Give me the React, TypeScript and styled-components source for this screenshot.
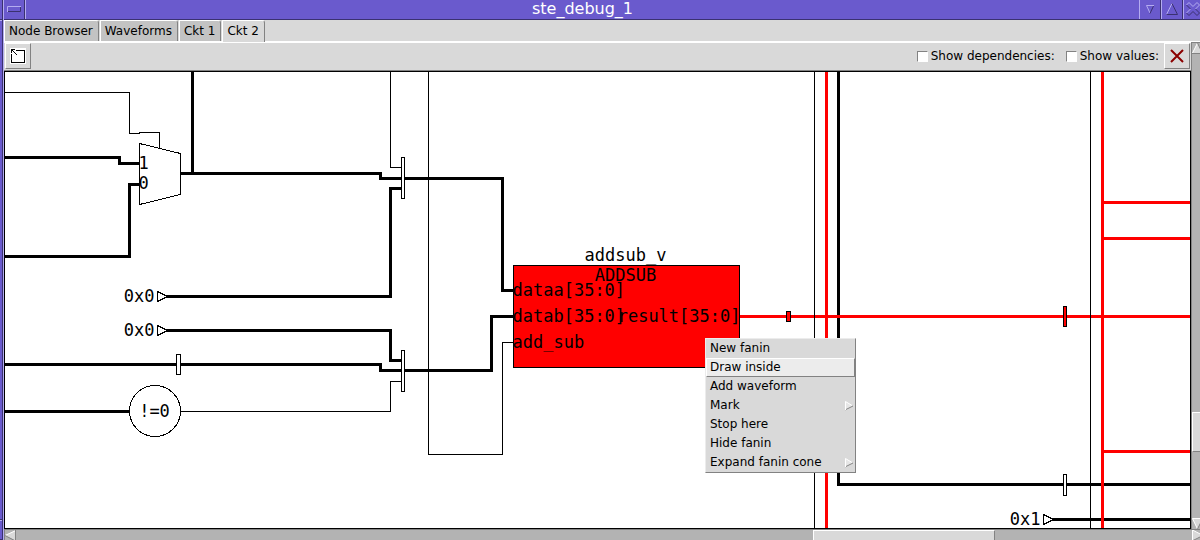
import React from "react";
import styled, { createGlobalStyle, css } from "styled-components";

const purple = "#6a5acd";
const purpleLight = "#b4acf0";
const purpleDark = "#3a3170";
const face = "#d9d9d9";
const trough = "#b3b3b3";
const shade = "#828282";

const GlobalStyle = createGlobalStyle`
  * { box-sizing: border-box; }
  body {
    margin: 0;
    overflow: hidden;
    background: ${face};
    color: #000;
    font: 12px/16px "DejaVu Sans", sans-serif;
  }
  button, input { font: inherit; color: inherit; margin: 0; padding: 0; }
  svg { flex: none; }
`;

const Frame = styled.div`
  display: flex;
  min-height: 100vh;
  overflow: hidden;
`;

const FrameEdge = styled.div`
  display: flex;
  flex-direction: column;
  flex: none;
  width: 4px;
  background: ${purple};
  border-right: 1px solid ${purpleLight};
  box-shadow: inset -1px 0 ${purpleDark};
`;

const EdgeCorner = styled.div<{ $grow?: boolean }>`
  flex: ${(p) => (p.$grow ? "1" : "0 0 20px")};
  width: 2px;
  border-bottom: 1px solid ${purpleDark};
  box-shadow: 0 1px ${purpleLight};
`;

const Shell = styled.div`
  display: flex;
  flex-direction: column;
  flex: 1;
  min-width: 0;
`;

const TitleBar = styled.header`
  display: flex;
  height: 20px;
  background: ${purple};
  border-bottom: 1px solid ${purpleDark};
`;

const Title = styled.h1`
  flex: 1;
  margin: 0;
  color: #fff;
  font-size: 16px;
  font-weight: 400;
  line-height: 18px;
  text-align: center;
`;

const FrameButton = styled.button`
  display: flex;
  flex: none;
  align-items: center;
  justify-content: center;
  width: 22px;
  padding-bottom: 1px;
  border: 0;
  border-left: 1px solid ${purpleLight};
  border-right: 1px solid ${purpleDark};
  background: ${purple};
  overflow: hidden;
`;

const MenuButton = styled(FrameButton)`
  border-left: 0;
  border-right: 1px solid ${purpleLight};
  box-shadow: inset -1px 0 ${purpleDark};
  padding-right: 2px;
`;

const CloseFrameButton = styled(FrameButton)`
  width: 17px;
  border-right: 0;
  justify-content: flex-start;
  padding-left: 2px;
`;

const Tabs = styled.nav`
  display: flex;
  flex: none;
  gap: 1px;
  height: 23px;
  border-bottom: 2px solid #fff;
`;

const Tab = styled.button<{ $active?: boolean }>`
  height: ${(p) => (p.$active ? "22px" : "21px")};
  padding: 0 5px ${(p) => (p.$active ? "1px" : "0")} 4px;
  border: 0;
  border-top: 1px solid #fff;
  border-left: 1px solid #fff;
  border-right: 1px solid ${shade};
  border-top-right-radius: 3px;
  background: ${(p) => (p.$active ? face : "#c3c3c3")};
  line-height: 20px;
  white-space: nowrap;
`;

const Content = styled.div`
  display: flex;
  flex: 1;
`;

const Pane = styled.main`
  display: flex;
  flex-direction: column;
  flex: 1;
  min-width: 0;
`;

const Toolbar = styled.div`
  display: flex;
  flex: none;
  align-items: stretch;
  height: 28px;
  padding: 0 1px 1px;
  border-bottom: 1px solid ${shade};
  background: ${face};
`;

const ToolButton = styled.button`
  display: flex;
  align-items: center;
  justify-content: center;
  width: 26px;
  border: 1px solid;
  border-color: #fff ${shade} ${shade} #fff;
  background: ${face};
`;

const Options = styled.div`
  display: flex;
  align-items: center;
  gap: 11px;
  margin-left: auto;
  padding-right: 5px;
`;

const Option = styled.label`
  display: flex;
  align-items: center;
  gap: 3px;
  white-space: nowrap;
`;

const Check = styled.input`
  appearance: none;
  width: 11px;
  height: 11px;
  border: 1px solid;
  border-color: ${shade} #fff #fff ${shade};
  background: #fff;
`;

const Canvas = styled.section`
  position: relative;
  flex: 1;
  min-height: 458px;
  border: 1px solid #000;
  background: #fff;
  overflow: hidden;
`;

const Schematic = styled.svg`
  display: block;
  width: 1185px;
  height: 456px;
  overflow: visible;
  shape-rendering: crispEdges;

  text {
    font: 17px "DejaVu Sans Mono", monospace;
    fill: #000;
  }
`;

const Wire = styled.path<{ $thick?: boolean; $hot?: boolean }>`
  fill: none;
  stroke: ${(p) => (p.$hot ? "#f00" : "#000")};
  stroke-width: ${(p) => (p.$thick ? 3 : 1)};
`;

const shape = css<{ $hot?: boolean }>`
  fill: ${(p) => (p.$hot ? "#f00" : "#fff")};
  stroke: #000;
`;
const Block = styled.rect<{ $hot?: boolean }>`
  ${shape}
`;
const Poly = styled.polygon<{ $hot?: boolean }>`
  ${shape}
`;
const Round = styled.circle<{ $hot?: boolean }>`
  ${shape}
`;

const Popup = styled.div`
  position: absolute;
  left: 700px;
  top: 266px;
  width: 151px;
  border: 1px solid;
  border-color: #ececec ${shade} ${shade} #ececec;
  background: ${face};
`;

const PopupItem = styled.button<{ $active?: boolean }>`
  display: flex;
  align-items: center;
  justify-content: space-between;
  width: 100%;
  height: 19px;
  padding: 0 1px 2px 3px;
  border: 1px solid;
  border-color: ${(p) => (p.$active ? `#fff ${shade} ${shade} #fff` : face)};
  background: ${(p) => (p.$active ? "#ececec" : face)};
  text-align: left;

  svg { align-self: flex-end; }
`;

const VScroll = styled.div`
  display: flex;
  flex-direction: column;
  flex: none;
  width: 9px;
  margin-top: -1px;
  border-top: 1px solid ${shade};
  border-left: 1px solid ${shade};
  background: ${trough};
  overflow: hidden;
`;

const HScroll = styled.div`
  display: flex;
  flex: none;
  height: 11px;
  margin-right: -3px;
  border-top: 1px solid ${shade};
  border-left: 1px solid ${shade};
  background: ${trough};
  overflow: hidden;
`;

const ScrollButton = styled.button`
  display: flex;
  flex: none;
  width: 11px;
  height: 11px;
  border: 0;
  background: none;
`;

const Space = styled.div<{ $share: number }>`
  flex: ${(p) => p.$share} 1 0;
`;

const Thumb = styled.div<{ $share: number }>`
  flex: ${(p) => p.$share} 1 0;
  border: 1px solid;
  border-color: #fff ${shade} ${shade} #fff;
  background: ${face};
`;

const VThumb = styled(Thumb)`
  border-right: 0;
`;
const HThumb = styled(Thumb)`
  border-bottom: 0;
`;

type Wiring = { d: string; thick?: boolean; hot?: boolean };

const wires: Wiring[] = [
  { d: "M4 92H129V133H139V132H159V148" },
  { d: "M390 71V167H402" },
  { d: "M428 71V454H502V342H512" },
  { d: "M180 411H390V381H402" },
  { d: "M4 157H119V163H139", thick: true },
  { d: "M4 256H129V184H139", thick: true },
  { d: "M192 71V173", thick: true },
  { d: "M180 173H380V178H502V290H512", thick: true },
  { d: "M166 296H390V188H402", thick: true },
  { d: "M166 330H390V360H402", thick: true },
  { d: "M4 364H380V370H491V316H512", thick: true },
  { d: "M4 411H130", thick: true },
  { d: "M838 71V484H1600", thick: true },
  { d: "M1052 519H1600", thick: true },
  { d: "M739 316H1600", thick: true, hot: true },
  { d: "M826 71V900", thick: true, hot: true },
  { d: "M1102 71V900", thick: true, hot: true },
  { d: "M1102 202H1600", thick: true, hot: true },
  { d: "M1102 238H1600", thick: true, hot: true },
  { d: "M1102 451H1600", thick: true, hot: true },
  { d: "M814 71V900" },
  { d: "M1090 71V900" },
];

const registers = [
  { x: 401, y: 157, w: 3, h: 41 },
  { x: 401, y: 350, w: 3, h: 41 },
  { x: 176, y: 354, w: 4, h: 20 },
  { x: 1063, y: 474, w: 3, h: 21 },
  { x: 1063, y: 306, w: 3, h: 20, hot: true },
  { x: 786, y: 311, w: 4, h: 10, hot: true },
];

const constants = [
  { x: 157, y: 296, label: "0x0" },
  { x: 157, y: 330, label: "0x0" },
  { x: 1043, y: 519, label: "0x1" },
];

const menuItems = [
  { label: "New fanin" },
  { label: "Draw inside", active: true },
  { label: "Add waveform" },
  { label: "Mark", sub: true },
  { label: "Stop here" },
  { label: "Hide fanin" },
  { label: "Expand fanin cone", sub: true },
];

// Integer coordinates name pixel centres: the view box starts on a half pixel.
function Circuit() {
  return (
    <Schematic viewBox="4.5 71.5 1185 456" role="img" aria-label="Circuit">
      {wires.map((w) => (
        <Wire key={w.d} d={w.d} $thick={w.thick} $hot={w.hot} />
      ))}
      {registers.map((r) => (
        <Block key={`${r.x}-${r.y}`} x={r.x} y={r.y} width={r.w} height={r.h} $hot={r.hot} />
      ))}
      <Poly points="139,143 180,153 180,194 139,204" />
      <text x="138" y="168">1</text>
      <text x="138" y="188">0</text>
      {constants.map((c) => (
        <g key={`${c.x}-${c.y}`}>
          <text x={c.x - 3} y={c.y + 5} textAnchor="end">{c.label}</text>
          <Poly points={`${c.x},${c.y - 5} ${c.x + 10},${c.y} ${c.x},${c.y + 5}`} />
        </g>
      ))}
      <Round cx="154.5" cy="410.5" r="25.5" />
      <text x="154" y="416" textAnchor="middle">!=0</text>
      <Block x="513" y="265" width="226" height="102" $hot />
      <text x="625" y="260" textAnchor="middle">addsub_v</text>
      <text x="625" y="280" textAnchor="middle">ADDSUB</text>
      <text x="512" y="295">dataa[35:0]</text>
      <text x="512" y="321">datab[35:0]</text>
      <text x="512" y="347">add_sub</text>
      <text x="740" y="321" textAnchor="end">result[35:0]</text>
    </Schematic>
  );
}

function SubmenuArrow() {
  return (
    <svg width="8" height="11" viewBox="0 0 8 11" aria-hidden="true">
      <path d="M0 0L8 5L0 10Z" fill="#e6e6e6" />
      <path d="M0 9L8 5" stroke={shade} fill="none" />
      <path d="M0.5 9V0.5L7 4.5" stroke="#fff" fill="none" />
    </svg>
  );
}

function ScrollArrow({ dir }: { dir: "up" | "down" | "left" | "right" }) {
  const art = {
    up: ["M0 11L5.5 0L11 11Z", "M0 11L5.5 0", "M5.5 0L10.5 10.5H0"],
    down: ["M0 0H11L5.5 11Z", "M11 0.5H0.5L5.5 11", "M5.5 11L11 0"],
    left: ["M0 5.5L11 0V11Z", "M0 5.5L11 0.5", "M10.5 0V11L0 5.5"],
    right: ["M0 0L11 5.5L0 11Z", "M0.5 11V0L11 5.5", "M0 11L11 5.5"],
  }[dir];
  return (
    <svg width="11" height="11" viewBox="0 0 11 11" aria-hidden="true">
      <path d={art[0]} fill={face} />
      <path d={art[1]} stroke="#fff" fill="none" />
      <path d={art[2]} stroke={shade} fill="none" />
    </svg>
  );
}

export default function App() {
  return (
    <>
      <GlobalStyle />
      <Frame>
        <FrameEdge>
          <EdgeCorner />
          <EdgeCorner $grow />
          <EdgeCorner />
        </FrameEdge>
        <Shell>
          <TitleBar>
            <MenuButton aria-label="Window menu">
              <svg width="14" height="6" viewBox="0 0 14 6" fill="none">
                <path d="M0.5 6V0.5H14" stroke={purpleLight} />
                <path d="M1 5.5H13.5V1" stroke={purpleDark} />
              </svg>
            </MenuButton>
            <Title>ste_debug_1</Title>
            <FrameButton aria-label="Minimize">
              <svg width="8" height="9" viewBox="0 0 8 9" fill="none">
                <path d="M8 0.5H0.5L4 8" stroke={purpleLight} />
                <path d="M4 8.5L7.5 1" stroke={purpleDark} />
              </svg>
            </FrameButton>
            <FrameButton aria-label="Maximize">
              <svg width="12" height="12" viewBox="0 0 12 12" fill="none">
                <path d="M0.5 11.5L6 0.5" stroke={purpleLight} />
                <path d="M6 0.5L11.5 11.5H0.5" stroke={purpleDark} />
              </svg>
            </FrameButton>
            <CloseFrameButton aria-label="Close window">
              <svg width="14" height="14" viewBox="0 0 14 14" fill="none">
                <path d="M0.5 3L3 0.5L7 4.5L11 0.5L13.5 3L9.5 7M4.5 7L0.5 11" stroke={purpleLight} />
                <path d="M0.5 3L4.5 7M0.5 11L3 13.5L7 9.5L11 13.5L13.5 11L9.5 7" stroke={purpleDark} />
              </svg>
            </CloseFrameButton>
          </TitleBar>
          <Tabs>
            <Tab>Node Browser</Tab>
            <Tab>Waveforms</Tab>
            <Tab>Ckt 1</Tab>
            <Tab $active>Ckt 2</Tab>
          </Tabs>
          <Content>
            <Pane>
              <Toolbar>
                <ToolButton aria-label="Zoom to fit">
                  <svg width="16" height="16" viewBox="0 0 16 16" shapeRendering="crispEdges">
                    <path d="M0 0H16V16H0Z" fill="#fff" />
                    <path d="M1.5 6V14.5H14.5V2.5H6" stroke="#000" fill="none" />
                    <path d="M1 1H5V2H3V3H4V4H5V5H6V6H7V7H6V6H5V5H4V4H3V3H2V5H1Z" fill="#000" />
                  </svg>
                </ToolButton>
                <Options>
                  <Option>
                    <Check type="checkbox" />
                    Show dependencies:
                  </Option>
                  <Option>
                    <Check type="checkbox" />
                    Show values:
                  </Option>
                </Options>
                <ToolButton aria-label="Close circuit">
                  <svg width="14" height="14" viewBox="0 0 14 14">
                    <path d="M1 1L13 13M13 1L1 13" stroke="#8b0000" strokeWidth="2" />
                  </svg>
                </ToolButton>
              </Toolbar>
              <Canvas>
                <Circuit />
                <Popup role="menu">
                  {menuItems.map((m) => (
                    <PopupItem key={m.label} role="menuitem" $active={m.active}>
                      {m.label}
                      {m.sub && <SubmenuArrow />}
                    </PopupItem>
                  ))}
                </Popup>
              </Canvas>
            </Pane>
            <VScroll>
              <ScrollButton aria-label="Scroll up"><ScrollArrow dir="up" /></ScrollButton>
              <Space $share={360} />
              <VThumb $share={38} />
              <Space $share={66} />
              <ScrollButton aria-label="Scroll down"><ScrollArrow dir="down" /></ScrollButton>
            </VScroll>
          </Content>
          <HScroll>
            <ScrollButton aria-label="Scroll left"><ScrollArrow dir="left" /></ScrollButton>
            <Space $share={798} />
            <HThumb $share={181} />
            <Space $share={197} />
            <ScrollButton aria-label="Scroll right"><ScrollArrow dir="right" /></ScrollButton>
          </HScroll>
        </Shell>
      </Frame>
    </>
  );
}
